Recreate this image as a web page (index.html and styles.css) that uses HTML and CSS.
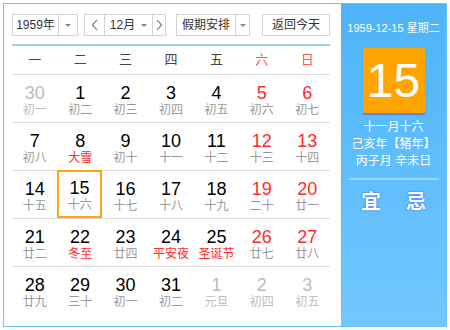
FILE: index.html
```html
<!DOCTYPE html>
<html>
<head>
<meta charset="utf-8">
<link rel="stylesheet" href="styles.css">
</head>
<body>
<div class="cal">
  <div class="main">
    <div class="toolbar">
      <div class="sel sel-year"><span class="sel-text">1959年</span><span class="sel-arrow"><i class="tri"></i></span></div>
      <div class="sel sel-month">
        <span class="nav"><svg width="8" height="12" viewBox="0 0 8 12"><polyline points="6,1 1.5,6 6,11" fill="none" stroke="#666" stroke-width="1.1"/></svg></span>
        <span class="month-text">12月<i class="tri tri-m"></i></span>
        <span class="nav nav-r"><svg width="8" height="12" viewBox="0 0 8 12"><polyline points="2,1 6.5,6 2,11" fill="none" stroke="#666" stroke-width="1.1"/></svg></span>
      </div>
      <div class="sel sel-hol"><span class="sel-text">假期安排</span><span class="sel-arrow"><i class="tri"></i></span></div>
      <div class="btn-today">返回今天</div>
    </div>
    <div class="grid">
      <div class="week">
        <span>一</span><span>二</span><span>三</span><span>四</span><span>五</span><span class="we">六</span><span class="we">日</span>
      </div>
      <div class="row">
        <div class="cell other"><b>30</b><em>初一</em></div>
        <div class="cell"><b>1</b><em>初二</em></div>
        <div class="cell"><b>2</b><em>初三</em></div>
        <div class="cell"><b>3</b><em>初四</em></div>
        <div class="cell"><b>4</b><em>初五</em></div>
        <div class="cell red"><b>5</b><em>初六</em></div>
        <div class="cell red"><b>6</b><em>初七</em></div>
      </div>
      <div class="row">
        <div class="cell"><b>7</b><em>初八</em></div>
        <div class="cell"><b>8</b><em class="fest">大雪</em></div>
        <div class="cell"><b>9</b><em>初十</em></div>
        <div class="cell"><b>10</b><em>十一</em></div>
        <div class="cell"><b>11</b><em>十二</em></div>
        <div class="cell red"><b>12</b><em>十三</em></div>
        <div class="cell red"><b>13</b><em>十四</em></div>
      </div>
      <div class="row">
        <div class="cell"><b>14</b><em>十五</em></div>
        <div class="cell cur"><b>15</b><em>十六</em></div>
        <div class="cell"><b>16</b><em>十七</em></div>
        <div class="cell"><b>17</b><em>十八</em></div>
        <div class="cell"><b>18</b><em>十九</em></div>
        <div class="cell red"><b>19</b><em>二十</em></div>
        <div class="cell red"><b>20</b><em>廿一</em></div>
      </div>
      <div class="row">
        <div class="cell"><b>21</b><em>廿二</em></div>
        <div class="cell"><b>22</b><em class="fest">冬至</em></div>
        <div class="cell"><b>23</b><em>廿四</em></div>
        <div class="cell"><b>24</b><em class="fest">平安夜</em></div>
        <div class="cell"><b>25</b><em class="fest">圣诞节</em></div>
        <div class="cell red"><b>26</b><em>廿七</em></div>
        <div class="cell red"><b>27</b><em>廿八</em></div>
      </div>
      <div class="row last">
        <div class="cell"><b>28</b><em>廿九</em></div>
        <div class="cell"><b>29</b><em>三十</em></div>
        <div class="cell"><b>30</b><em>初一</em></div>
        <div class="cell"><b>31</b><em>初二</em></div>
        <div class="cell other"><b>1</b><em>元旦</em></div>
        <div class="cell other"><b>2</b><em>初四</em></div>
        <div class="cell other"><b>3</b><em>初五</em></div>
      </div>
    </div>
  </div>
  <div class="side">
    <div class="side-date">1959-12-15 星期二</div>
    <div class="big-day">15</div>
    <div class="lunar">
      <div>十一月十六</div>
      <div>己亥年【猪年】</div>
      <div>丙子月 辛未日</div>
    </div>
    <div class="side-sep"></div>
    <div class="yiji"><span>宜</span><span>忌</span></div>
  </div>
</div>
</body>
</html>
```
FILE: styles.css
```css
* { box-sizing: border-box; }
html, body { margin: 0; padding: 0; background: #fff; }
body {
  font-family: "Liberation Sans", "Noto Sans CJK SC", sans-serif;
  font-size: 12px;
  color: #333;
}
.cal {
  margin: 3px;
  width: 444px;
  height: 324px;
  border: 1px solid #6ac2fb;
  display: flex;
}
.main {
  width: 337px;
  padding: 10px 0 0 8px;
}
.toolbar {
  display: flex;
  height: 22px;
  align-items: stretch;
}
.sel {
  display: flex;
  border: 1px solid #d4d4d4;
  background: #fff;
  height: 22px;
  line-height: 20px;
  color: #333;
}
.sel-text { text-align: center; }
.sel-arrow {
  border-left: 1px solid #d4d4d4;
  display: flex;
  align-items: center;
  justify-content: center;
}
.tri {
  display: inline-block;
  width: 0; height: 0;
  border-left: 3px solid transparent;
  border-right: 3px solid transparent;
  border-top: 3px solid #888;
}
.sel-year { width: 66px; }
.sel-year .sel-text { width: 45px; }
.sel-year .sel-arrow { width: 19px; }
.sel-month { width: 82px; margin-left: 6px; }
.nav {
  width: 19px;
  display: flex;
  align-items: center;
  justify-content: center;
}
.month-text {
  width: 49px;
  border-left: 1px solid #d4d4d4;
  border-right: 1px solid #d4d4d4;
  display: flex;
  align-items: center;
  justify-content: center;
  gap: 6px;
}
.nav-r { width: 12px; }
.sel-hol { width: 74px; margin-left: 10px; }
.sel-hol .sel-text { width: 58px; }
.sel-hol .sel-arrow { width: 14px; }
.btn-today {
  width: 68px;
  margin-left: 12px;
  border: 1px solid #d4d4d4;
  text-align: center;
  line-height: 20px;
  color: #333;
}
.grid {
  width: 318px;
  margin-top: 8px;
  border-top: 2px solid #9dd5fa;
}
.week {
  display: grid;
  grid-template-columns: repeat(7, 1fr);
  height: 29px;
  line-height: 28px;
  border-bottom: 1px solid #dcdcdc;
  text-align: center;
  font-size: 13px;
  color: #444;
}
.week .we { color: #f55; }
.row {
  display: grid;
  grid-template-columns: repeat(7, 1fr);
  height: 48px;
  border-bottom: 1px solid #dcdcdc;
}
.row.last { border-bottom: none; }
.cell {
  text-align: center;
  padding-top: 8px;
  height: 47px;
}
.cell b {
  display: block;
  font-weight: normal;
  font-size: 18px;
  line-height: 20px;
  color: #000;
}
.cell em {
  display: block;
  font-style: normal;
  font-size: 12px;
  line-height: 14px;
  color: #999;
}
.cell.red b { color: #ff2a2a; }
.cell.other b { color: #bbb; }
.cell.other em { color: #bbb; }
.cell em.fest { color: #ff2a2a; }
.cell.cur {
  border: 2px solid #ffa40c;
  padding-top: 6px;
  margin: 0 1px 0 0;
  height: 48px;
  margin-top: -1px;
}
.side {
  flex: 1;
  background: linear-gradient(#4db4f8, #72c7ff);
  color: #fff;
  display: flex;
  flex-direction: column;
  align-items: center;
}
.side-date {
  margin-top: 16px;
  height: 16px;
  line-height: 16px;
  font-size: 11px;
}
.big-day {
  margin-top: 12px;
  width: 62px;
  height: 65px;
  background: #ffa500;
  border-radius: 2px;
  box-shadow: 0 2px 1px rgba(110, 90, 200, 0.6);
  font-size: 48px;
  line-height: 65px;
  text-align: center;
  color: #fff;
}
.lunar {
  margin-top: 6px;
  text-align: center;
  font-size: 12px;
  line-height: 17px;
}
.side-sep {
  margin-top: 8px;
  width: 90px;
  height: 2px;
  background: rgba(255, 255, 255, 0.35);
}
.yiji {
  margin-top: 10px;
  display: flex;
  gap: 25px;
  font-size: 20px;
  font-weight: bold;
  line-height: 24px;
  color: #fff;
  text-shadow: 0 0 2px #3b6ee8, 0 0 1px #3b6ee8;
}
```
